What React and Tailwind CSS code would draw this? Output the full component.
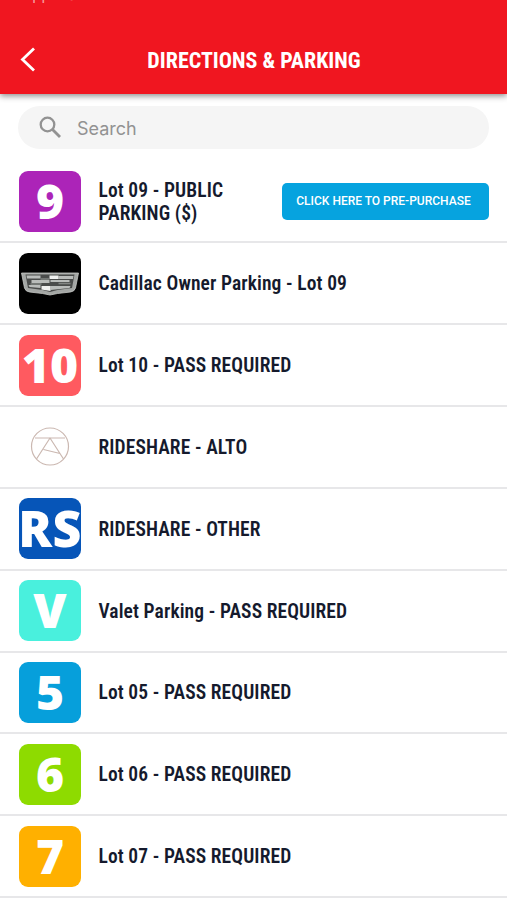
import { clsx } from 'clsx'

const lots = [
  { badge: '9', color: 'bg-[#ac24b8]', name: 'Lot 09 - PUBLIC PARKING ($)', prePurchase: true },
  { logo: 'cadillac', color: 'bg-black', name: 'Cadillac Owner Parking - Lot 09' },
  { badge: '10', color: 'bg-[#ff5a60]', name: 'Lot 10 - PASS REQUIRED' },
  { logo: 'alto', color: 'bg-white', name: 'RIDESHARE - ALTO' },
  { badge: 'RS', color: 'bg-[#0655b8]', name: 'RIDESHARE - OTHER', wide: true },
  { badge: 'V', color: 'bg-[#49f0dd]', name: 'Valet Parking - PASS REQUIRED' },
  { badge: '5', color: 'bg-[#069fdb]', name: 'Lot 05 - PASS REQUIRED' },
  { badge: '6', color: 'bg-[#8edb00]', name: 'Lot 06 - PASS REQUIRED' },
  { badge: '7', color: 'bg-[#ffb000]', name: 'Lot 07 - PASS REQUIRED' },
]

function CadillacLogo() {
  return (
    <svg viewBox="0 0 61 61" className="size-full">
      <path d="M2 20 H59 L56 35 Q55 38.500 51 39 L38 40.500 L30.500 42 L23 40.500 L10 39 Q6 38.500 5 35 Z" fill="#a3a6a4" stroke="#c5c8c5" strokeWidth="0.800" />
      <path d="M6 21.500 H55 L52.500 35 L38 37 L30.500 39 L23 37 L8.500 35 Z" fill="#4a4c4b" />
      <g fill="#b9bcba">
        <path d="M7 22.500 H21 V25.500 H7.500Z M39 23 H54 L53.500 26 H39Z M12 27 H30 V30 H12Z M31 27 H50 V29 H31Z M9 32 H21 V35 L10 34Z M31 33 H51 L50 35 L31 37Z" />
        <path d="M30 22.500 H39 V26 H30Z M22 33 H31 V38 L22 36.500Z" fill="#f0f1f0" />
      </g>
      <path d="M21 26 H30 M39 30.500 H51 M11 31 H22" stroke="#838684" strokeWidth="1.500" />
    </svg>
  )
}

function AltoLogo() {
  return (
    <svg viewBox="0 0 61 61" className="size-full" fill="none" stroke="#cbb8b1" strokeWidth="1.200">
      <circle cx="30.500" cy="30.500" r="18.500" />
      <path d="M15.500 22 H45.500 M17 43 L30.500 22 L44 43 M24 33.500 L40.500 37.500" />
    </svg>
  )
}

function Tile({ lot }) {
  return (
    <div className={clsx('flex h-[61px] w-[62px] shrink-0 items-center justify-center overflow-hidden rounded-[9px]', lot.color)}>
      {lot.logo === 'cadillac' && <CadillacLogo />}
      {lot.logo === 'alto' && <AltoLogo />}
      {lot.badge && (
        <span
          className={clsx(
            "pb-px font-['Noto_Sans',sans-serif] leading-[60px] font-black text-white",
            lot.wide ? 'text-[50px] tracking-[0.500px]' : 'text-[48px]',
          )}
        >
          {lot.badge}
        </span>
      )}
    </div>
  )
}

function LotRow({ lot }) {
  return (
    <li className="flex h-[81.850px] items-center border-b-2 border-[#e7e7e9] pr-[18px] pl-[19px]">
      <Tile lot={lot} />
      <div className="ml-[17.500px] flex-1 pt-px text-[19.500px] leading-[23px] font-semibold tracking-[0.100px] font-stretch-condensed text-[#151a2d]">
        <p className={clsx(lot.prePurchase && 'w-[150px]')}>{lot.name}</p>
      </div>
      {lot.prePurchase && (
        <button className="h-[37px] w-[207px] rounded-[5px] bg-[#06a3df] pr-1 font-[Roboto,sans-serif] text-[12px] font-medium whitespace-nowrap text-white">
          CLICK HERE TO PRE-PURCHASE
        </button>
      )}
    </li>
  )
}

export default function App() {
  return (
    <div className="h-[900px] w-[507px] overflow-hidden bg-white font-['Roboto_Condensed',Roboto,sans-serif]">
      <header className="relative flex h-[94px] items-end bg-[#f01620] shadow-[0_2px_6px_rgba(0,0,0,0.45)]">
        {/* status bar label, scrolled almost out of view */}
        <span className="absolute -top-[15px] left-[22px] font-[Inter,sans-serif] text-[15px] leading-[20px] text-white/60">Apple Store</span>
        <button aria-label="Back" className="mb-[22px] ml-5">
          <svg width="16" height="25" viewBox="0 0 16 25" fill="none" stroke="white" strokeWidth="2.800">
            <path d="M14 1.500 L2.500 12.500 L14 23.500" />
          </svg>
        </button>
        <h1 className="mb-5 flex-1 pr-[35px] text-center text-[22px] leading-[26px] font-bold font-stretch-condensed text-white">
          DIRECTIONS &amp; PARKING
        </h1>
      </header>
      <div className="mx-[18px] mt-3 flex h-[43px] items-center rounded-full bg-[#f5f5f5] pl-[21px] text-[#929292]">
        <svg width="23" height="23" viewBox="0 0 23 23" fill="none" stroke="currentColor">
          <circle cx="8.500" cy="8.500" r="6.800" strokeWidth="2.300" />
          <path d="M13.500 13.500 L21 21" strokeWidth="2.800" />
        </svg>
        <span className="ml-[15px] pt-0.5 font-[Inter,sans-serif] text-[18px]">Search</span>
      </div>
      <ul className="mt-[12.500px]">
        {lots.map((lot) => <LotRow key={lot.name} lot={lot} />)}
      </ul>
    </div>
  )
}
